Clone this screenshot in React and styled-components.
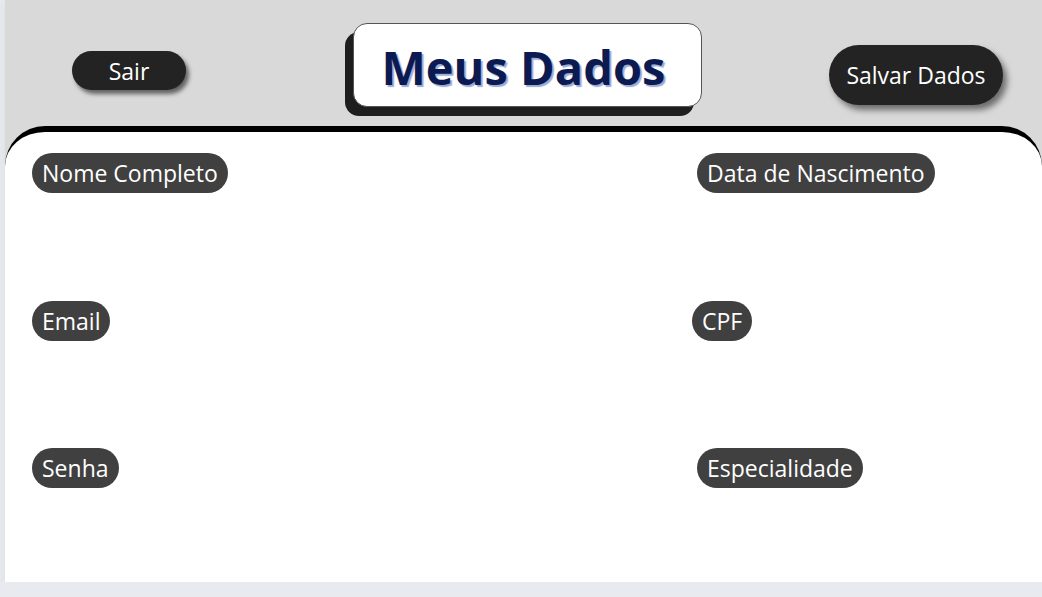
import React from 'react';
import styled, { createGlobalStyle } from 'styled-components';

const GlobalStyle = createGlobalStyle`
  body {
    margin: 0;
    background: #e9eaef;
    font-family: "Open Sans", "Noto Sans", Arial, sans-serif;
  }
`;

const Page = styled.div`
  margin-left: 5px;
  width: 1037px;
  height: 582px;
  background: #d9d9d9;
  display: flex;
  flex-direction: column;
  box-shadow: 0 4px 10px rgba(0, 0, 0, 0.06);
`;

const Header = styled.header`
  flex-shrink: 0;
  height: 126px;
  display: grid;
  grid-template-columns: 1fr auto 1fr;
  align-items: start;
`;

const PillButton = styled.button`
  justify-self: ${({ $side }) => ($side === 'left' ? 'start' : 'end')};
  margin: ${({ $top }) => $top}px ${({ $right }) => $right || 0}px 0 ${({ $left }) => $left || 0}px;
  width: ${({ $w }) => $w}px;
  height: ${({ $h }) => $h}px;
  padding: 0;
  border: none;
  border-radius: ${({ $h }) => $h / 2}px;
  background: #232323;
  color: #fff;
  font-family: "Open Sans", sans-serif;
  font-size: 23px;
  box-shadow: ${({ $shadow }) => $shadow};
  cursor: pointer;
`;

const TitleBox = styled.div`
  margin-top: 23px;
  margin-left: 8px;
  width: 347px;
  height: 82px;
  background: #fff;
  border: 1px solid #555;
  border-radius: 14px;
  box-shadow: -8px 9px 0 #1e1e1e;
  display: flex;
  align-items: center;
  justify-content: center;
`;

const Title = styled.h1`
  margin: 4px 8px 0 0;
  font-family: "Open Sans", sans-serif;
  font-weight: 700;
  font-size: 47px;
  color: #0c1a52;
  text-shadow: 2px 2px 1px #9aaad6;
`;

const Panel = styled.main`
  flex: 1;
  min-height: 0;
  overflow: hidden;
  background: #fff;
  border-top: 6px solid #000;
  border-radius: 40px 40px 0 0;
  padding: 21px 0 0 27px;
  display: grid;
  grid-template-columns: 660px 1fr;
  grid-auto-rows: 147.5px;
`;

const Field = styled.div`
  display: flex;
  flex-direction: column;
  align-items: flex-start;
  margin-left: ${({ $indent }) => $indent || 0}px;
`;

const Label = styled.label`
  height: 40px;
  padding: 0 10px;
  border-radius: 20px;
  background: #404040;
  color: #fff;
  font-family: "Open Sans", sans-serif;
  font-size: 23px;
  line-height: 40px;
`;

const Input = styled.input`
  margin-top: 8px;
  width: 420px;
  height: 40px;
  border: none;
  background: transparent;
  outline: none;
  font-family: "Open Sans", sans-serif;
  font-size: 20px;
`;

const fields = [
  { id: 'nome', label: 'Nome Completo' },
  { id: 'nasc', label: 'Data de Nascimento', indent: 5 },
  { id: 'email', label: 'Email' },
  { id: 'cpf', label: 'CPF' },
  { id: 'senha', label: 'Senha' },
  { id: 'esp', label: 'Especialidade', indent: 5 },
];

export default function App() {
  return (
    <>
      <GlobalStyle />
      <Page>
        <Header>
          <PillButton
            $side="left"
            $top={51}
            $left={67}
            $w={114}
            $h={39}
            $shadow="3px 4px 4px rgba(0,0,0,0.55)"
          >
            Sair
          </PillButton>
          <TitleBox>
            <Title>Meus Dados</Title>
          </TitleBox>
          <PillButton
            $side="right"
            $top={45}
            $right={39}
            $w={174}
            $h={60}
            $shadow="4px 5px 6px rgba(0,0,0,0.5)"
          >
            Salvar Dados
          </PillButton>
        </Header>
        <Panel>
          {fields.map((f) => (
            <Field key={f.id} $indent={f.indent}>
              <Label htmlFor={f.id}>{f.label}</Label>
              <Input id={f.id} />
            </Field>
          ))}
        </Panel>
      </Page>
    </>
  );
}
